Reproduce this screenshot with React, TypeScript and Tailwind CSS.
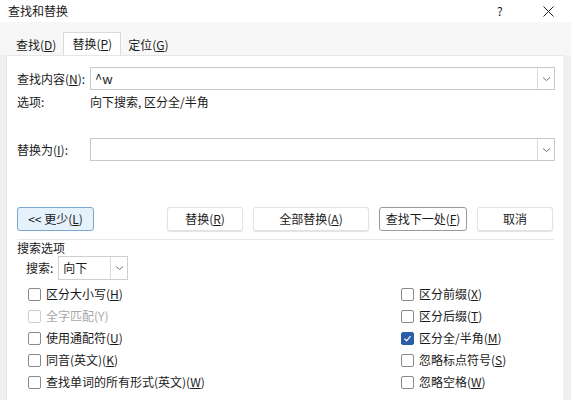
import React from 'react';

const font = { fontFamily: '"Microsoft YaHei", "Noto Sans CJK SC", sans-serif' };

function Chevron() {
  return (
    <svg width="9" height="6" viewBox="0 0 9 6" className="text-gray-500">
      <path d="M1 1.5 L4.5 4.5 L8 1.5" fill="none" stroke="currentColor" strokeWidth="1" />
    </svg>
  );
}

function Combo({ value }: { value?: string }) {
  return (
    <div className="flex-1 h-[23px] flex border border-[#c8c8c8] bg-white">
      <div className="flex-1 px-1 text-[13px] leading-[21px]">{value}</div>
      <div className="w-[17px] border-l border-[#dcdcdc] flex items-center justify-center"><Chevron /></div>
    </div>
  );
}

function Btn({ label, w, variant }: { label: React.ReactNode; w: string; variant?: 'blue' | 'focus' }) {
  const cls =
    variant === 'blue'
      ? 'bg-[#e5f1fb] border-[#7aa7d0]'
      : variant === 'focus'
      ? 'bg-white border-[#9a9a9a]'
      : 'bg-white border-[#e2e2e2] shadow-[0_1px_1px_rgba(0,0,0,0.12)]';
  return (
    <div className={`${w} h-[24px] border rounded-[3px] flex items-center justify-center text-[12px] ${cls}`}>{label}</div>
  );
}

function Check({ label, checked, disabled }: { label: React.ReactNode; checked?: boolean; disabled?: boolean }) {
  return (
    <div className={`h-[22px] flex items-center gap-[5px] text-[12px] ${disabled ? 'text-[#a8a8a8]' : ''}`}>
      <div
        className={`w-[13px] h-[13px] rounded-[2px] border flex items-center justify-center ${
          checked ? 'bg-[#2a5ea8] border-[#2a5ea8]' : disabled ? 'border-[#cfcfcf]' : 'border-[#8a8a8a]'
        }`}
      >
        {checked && (
          <svg width="9" height="9" viewBox="0 0 9 9">
            <path d="M1.5 4.8 L3.6 6.8 L7.5 2.2" fill="none" stroke="white" strokeWidth="1.2" />
          </svg>
        )}
      </div>
      <span>{label}</span>
    </div>
  );
}

const U = ({ c }: { c: string }) => <span className="underline">{c}</span>;

export default function App() {
  return (
    <div className="w-[571px] h-[400px] bg-[#f0f0f0] text-[#1a1a1a] overflow-hidden flex flex-col" style={font}>
      <div className="h-[22px] bg-white flex items-center pl-2 text-[12px]">
        <span className="flex-1">查找和替换</span>
        <span className="w-[10px] mr-[36px] text-[12px]">?</span>
        <svg width="11" height="11" viewBox="0 0 11 11" className="mr-[17px]">
          <path d="M0.5 0.5 L10.5 10.5 M10.5 0.5 L0.5 10.5" stroke="#222" strokeWidth="1" />
        </svg>
      </div>
      <div className="h-[11px] bg-[#f7f7f7]" />
      <div className="flex h-[22px] bg-[#f7f7f7] pl-[9px] text-[12px] items-end">
        <div className="px-[7px] h-[20px] leading-[20px]">查找(<U c="D" />)</div>
        <div className="px-[8px] h-[23px] leading-[22px] bg-white border border-b-0 border-[#dadada]">替换(<U c="P" />)</div>
        <div className="px-[7px] h-[20px] leading-[20px]">定位(<U c="G" />)</div>
      </div>
      <div className="flex-1 bg-white ml-[6px] mr-[8px] border-l border-t border-[#e6e6e6] pl-[10px] pr-[8px] pt-[11px] text-[12px]">
        <div className="flex items-center">
          <span className="w-[73px]">查找内容(<U c="N" />):</span>
          <Combo value="^w" />
        </div>
        <div className="flex mt-[3px] h-[18px] items-center">
          <span className="w-[73px]">选项:</span>
          <span>向下搜索, 区分全/半角</span>
        </div>
        <div className="flex items-center mt-[27px]">
          <span className="w-[73px]">替换为(<U c="I" />):</span>
          <Combo />
        </div>
        <div className="flex items-center mt-[46px] gap-[10px]">
          <Btn w="w-[77px]" variant="blue" label={<>&lt;&lt; 更少(<U c="L" />)</>} />
          <div className="w-[53px]" />
          <Btn w="w-[76px]" label={<>替换(<U c="R" />)</>} />
          <Btn w="w-[116px]" label={<>全部替换(<U c="A" />)</>} />
          <Btn w="w-[88px]" variant="focus" label={<>查找下一处(<U c="F" />)</>} />
          <Btn w="w-[76px]" label={<>取消</>} />
        </div>
        <div className="relative mt-[8px] border-t border-[#e8e8e8] mr-[1px]">
          <span className="absolute -top-[0px] left-0 bg-white pr-1 leading-[16px]">搜索选项</span>
        </div>
        <div className="flex items-center mt-[16px] pl-[9px] gap-[5px]">
          <span>搜索:</span>
          <div className="w-[70px] h-[24px] flex border border-[#cfcfcf]">
            <span className="flex-1 pl-[4px] leading-[22px]">向下</span>
            <div className="w-[17px] border-l border-[#dcdcdc] flex items-center justify-center"><Chevron /></div>
          </div>
        </div>
        <div className="flex pl-[11px] mt-[3px]">
          <div className="flex-1 flex flex-col">
            <Check label={<>区分大小写(<U c="H" />)</>} />
            <Check disabled label="全字匹配(Y)" />
            <Check label={<>使用通配符(<U c="U" />)</>} />
            <Check label={<>同音(英文)(<U c="K" />)</>} />
            <Check label={<>查找单词的所有形式(英文)(<U c="W" />)</>} />
          </div>
          <div className="w-[154px] flex flex-col">
            <Check label={<>区分前缀(<U c="X" />)</>} />
            <Check label={<>区分后缀(<U c="T" />)</>} />
            <Check checked label={<>区分全/半角(<U c="M" />)</>} />
            <Check label={<>忽略标点符号(<U c="S" />)</>} />
            <Check label={<>忽略空格(<U c="W" />)</>} />
          </div>
        </div>
      </div>
    </div>
  );
}
